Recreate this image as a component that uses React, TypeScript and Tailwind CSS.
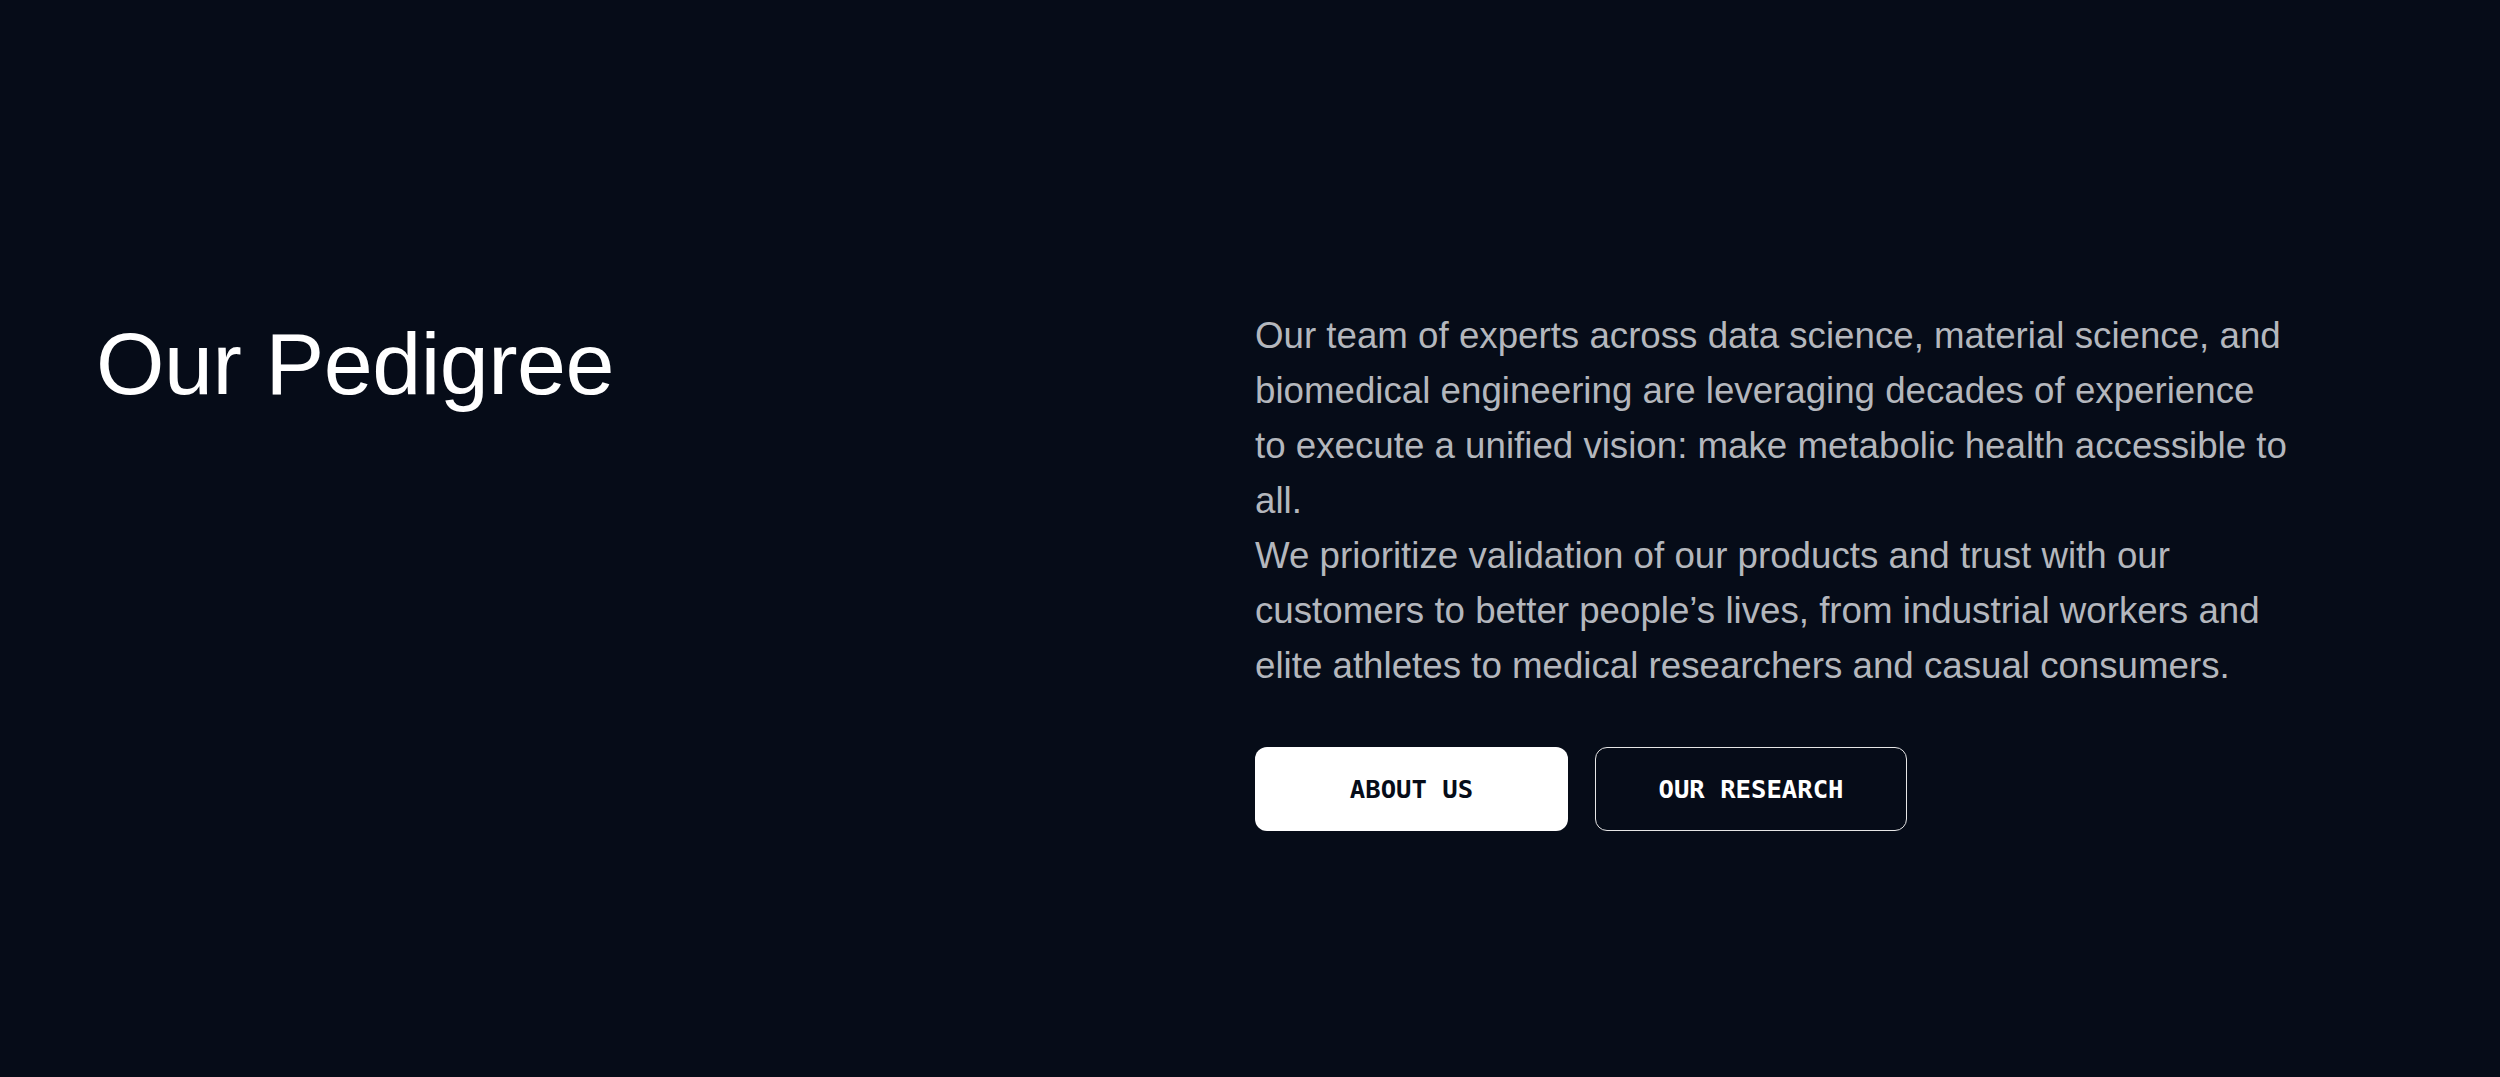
const SANS = "font-['Liberation_Sans',Arial,sans-serif]"
const MONO = "font-['DejaVu_Sans_Mono','Liberation_Mono',monospace]"

export default function App() {
  return (
    <div className={`min-h-screen bg-[#060c18] ${SANS}`}>
      <section className="flex px-[96px] pt-[308px] pb-[200px]">
        {/* Left column: title */}
        <div className="w-[1159px] shrink-0">
          <h1 className="mt-[12px] text-[88px] leading-none font-normal tracking-[-0.005em] text-white">Our Pedigree</h1>
        </div>

        {/* Right column: copy + actions */}
        <div className="w-[1036px]">
          <div className="text-[36.7px] leading-[1.5] text-[#b4b7bd]">
            <p>
              Our team of experts across data science, material science, and biomedical engineering are
              leveraging decades of experience to execute a unified vision: make metabolic health accessible
              to all.
            </p>
            <p>
              We prioritize validation of our products and trust with our customers to better people’s lives,
              from industrial workers and elite athletes to medical researchers and casual consumers.
            </p>
          </div>

          <div className="mt-[54px] flex gap-[27px]">
            <a
              href="#"
              className={`flex h-[84px] w-[313px] items-center justify-center rounded-xl bg-white text-[25.6px] font-bold text-[#060c18] ${MONO}`}
            >
              ABOUT US
            </a>
            <a
              href="#"
              className={`flex h-[84px] w-[312px] items-center justify-center rounded-xl border border-[#e6e6e6] text-[25.6px] font-bold text-white ${MONO}`}
            >
              OUR RESEARCH
            </a>
          </div>
        </div>
      </section>
    </div>
  )
}
